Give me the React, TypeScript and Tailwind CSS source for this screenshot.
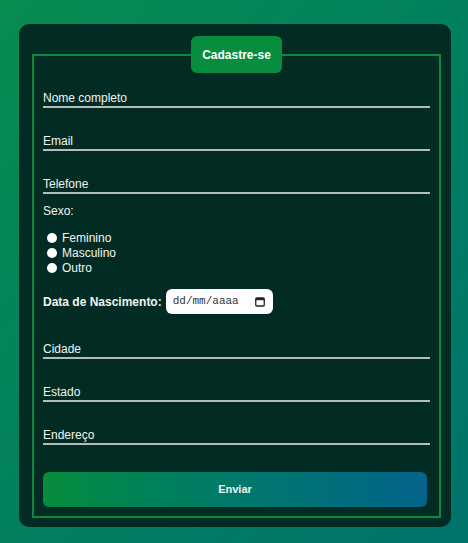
const FIELDS_TOP = ["Nome completo", "Email", "Telefone"];
const FIELDS_BOTTOM = ["Cidade", "Estado", "Endereço"];
const SEXOS = ["Feminino", "Masculino", "Outro"];

function LineInput({ label, className = "" }: { label: string; className?: string }) {
  return (
    <input
      type="text"
      placeholder={label}
      className={`block w-[387px] h-[18px] bg-transparent border-b-2 border-[#b4bdb9] font-['Liberation_Sans',Arial,sans-serif] text-[12px] leading-[16px] text-[#f1f5f2] placeholder:text-[#f1f5f2] outline-none ${className}`}
    />
  );
}

export default function App() {
  return (
    <div className="min-h-[543px] w-full bg-linear-to-br from-[#088c4f] to-[#00736b] pt-[24px] px-[19px] pb-[16px] font-['Liberation_Sans',Arial,sans-serif]">
      <div className="w-[432px] h-[503px] rounded-[10px] bg-[#022c23] px-[13px] pt-[12px] pb-[9px]">
        <fieldset className="border-2 border-[#0b8a3d] px-[9px] pb-[9px]">
          <legend className="mx-auto h-[37px] px-[11px] rounded-[6px] bg-[#088c3e] text-white text-[12px] font-bold flex items-center font-['Liberation_Sans',Arial,sans-serif]">
            Cadastre-se
          </legend>

          {FIELDS_TOP.map((f, i) => (
            <LineInput key={f} label={f} className={i === 0 ? "mt-[17px]" : "mt-[25px]"} />
          ))}

          <p className="mt-[10px] text-[12px] leading-[15px] text-[#f1f5f2]">Sexo:</p>

          <div className="mt-[11px] flex flex-col">
            {SEXOS.map((s) => (
              <label key={s} className="flex items-center h-[15px] text-[12px] text-[#f1f5f2]">
                <input
                  type="radio"
                  name="sexo"
                  className="appearance-none w-[10px] h-[10px] rounded-full bg-white ml-[4px] mr-[5px]"
                />
                {s}
              </label>
            ))}
          </div>

          <div className="mt-[14px] flex items-center h-[25px]">
            <span className="text-[12px] font-bold text-[#f1f5f2]">Data de Nascimento:</span>
            <div className="ml-[4px] w-[107px] h-[25px] rounded-[6px] bg-white flex items-center pl-[7px] pr-[8px] justify-between">
              <span className="text-[11px] text-[#333] font-['Liberation_Mono',monospace]">dd/mm/aaaa</span>
              <svg width="10" height="10" viewBox="0 0 10 10">
                <rect x="0.75" y="1" width="8.5" height="8" rx="1" fill="none" stroke="#222" strokeWidth="1.3" />
                <rect x="0.75" y="1" width="8.5" height="2.2" fill="#222" />
              </svg>
            </div>
          </div>

          {FIELDS_BOTTOM.map((f, i) => (
            <LineInput key={f} label={f} className={i === 0 ? "mt-[27px]" : "mt-[25px]"} />
          ))}

          <button
            type="button"
            className="mt-[27px] w-[384px] h-[35px] rounded-[6px] bg-linear-to-r from-[#088c3c] to-[#06638a] text-[11px] font-bold text-[#f1f5f2]"
          >
            Enviar
          </button>
        </fieldset>
      </div>
    </div>
  );
}
